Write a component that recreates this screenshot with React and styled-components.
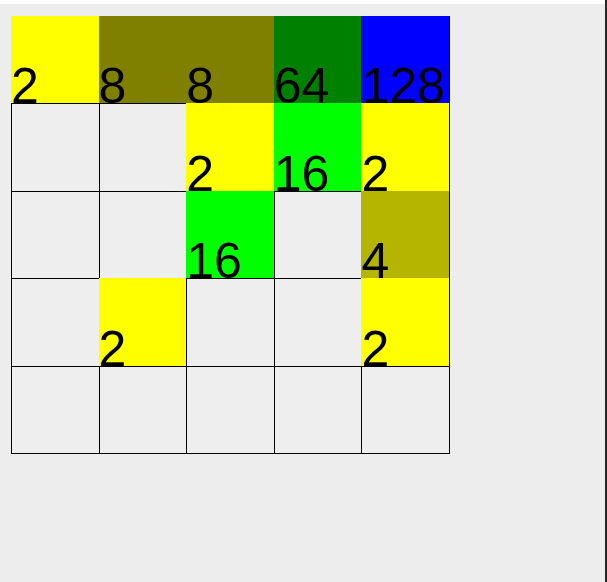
import React from 'react'
import styled, {createGlobalStyle} from 'styled-components'

const board = [
    [2, 8, 8, 64, 128],
    [0, 0, 2, 16, 2],
    [0, 0, 16, 0, 4],
    [0, 2, 0, 0, 2],
    [0, 0, 0, 0, 0],
]

const colors = {
    2: '#ffff00',
    4: '#b5b500',
    8: '#808000',
    16: '#00ff00',
    64: '#008000',
    128: '#0000ff',
}

const App = () => {
    return (
        <>
            <GlobalStyle/>
            <Frame>
                <TopStrip/>
                <Main>
                    <Board>
                        {board.flat().map((value, i) => (
                            <Cell key={i} value={value}>
                                {value ? <Number>{value}</Number> : null}
                            </Cell>
                        ))}
                    </Board>
                </Main>
            </Frame>
        </>
    )
}

export default App

const GlobalStyle = createGlobalStyle`
html, body {
    margin: 0;
    padding: 0;
    background: #ffffff;
}
body {
    font-family: "Liberation Sans", Arial, sans-serif;
}
`

const Frame = styled.div`
width: 607px;
height: 582px;
box-sizing: border-box;
display: flex;
flex-direction: column;
border-right: 2px solid #262626;
`

const TopStrip = styled.div`
height: 4px;
background: #ffffff;
`

const Main = styled.div`
flex: 1;
background: #ededed;
padding: 12px 0 0 11px;
`

const Board = styled.div`
display: grid;
grid-template-columns: repeat(5, 87.6px);
grid-template-rows: repeat(5, 87.4px);
width: max-content;
border-right: 1px solid #000;
border-bottom: 1px solid #000;
`

const Cell = styled.div`
box-sizing: border-box;
display: flex;
align-items: flex-end;
background: ${({value}) => value ? colors[value] : '#eeeeee'};
border-left: ${({value}) => value ? 'none' : '1px solid #000'};
border-top: ${({value}) => value ? 'none' : '1px solid #000'};
`

const Number = styled.span`
display: block;
font-size: 50px;
line-height: 50px;
margin-bottom: -8px;
color: #000;
`
